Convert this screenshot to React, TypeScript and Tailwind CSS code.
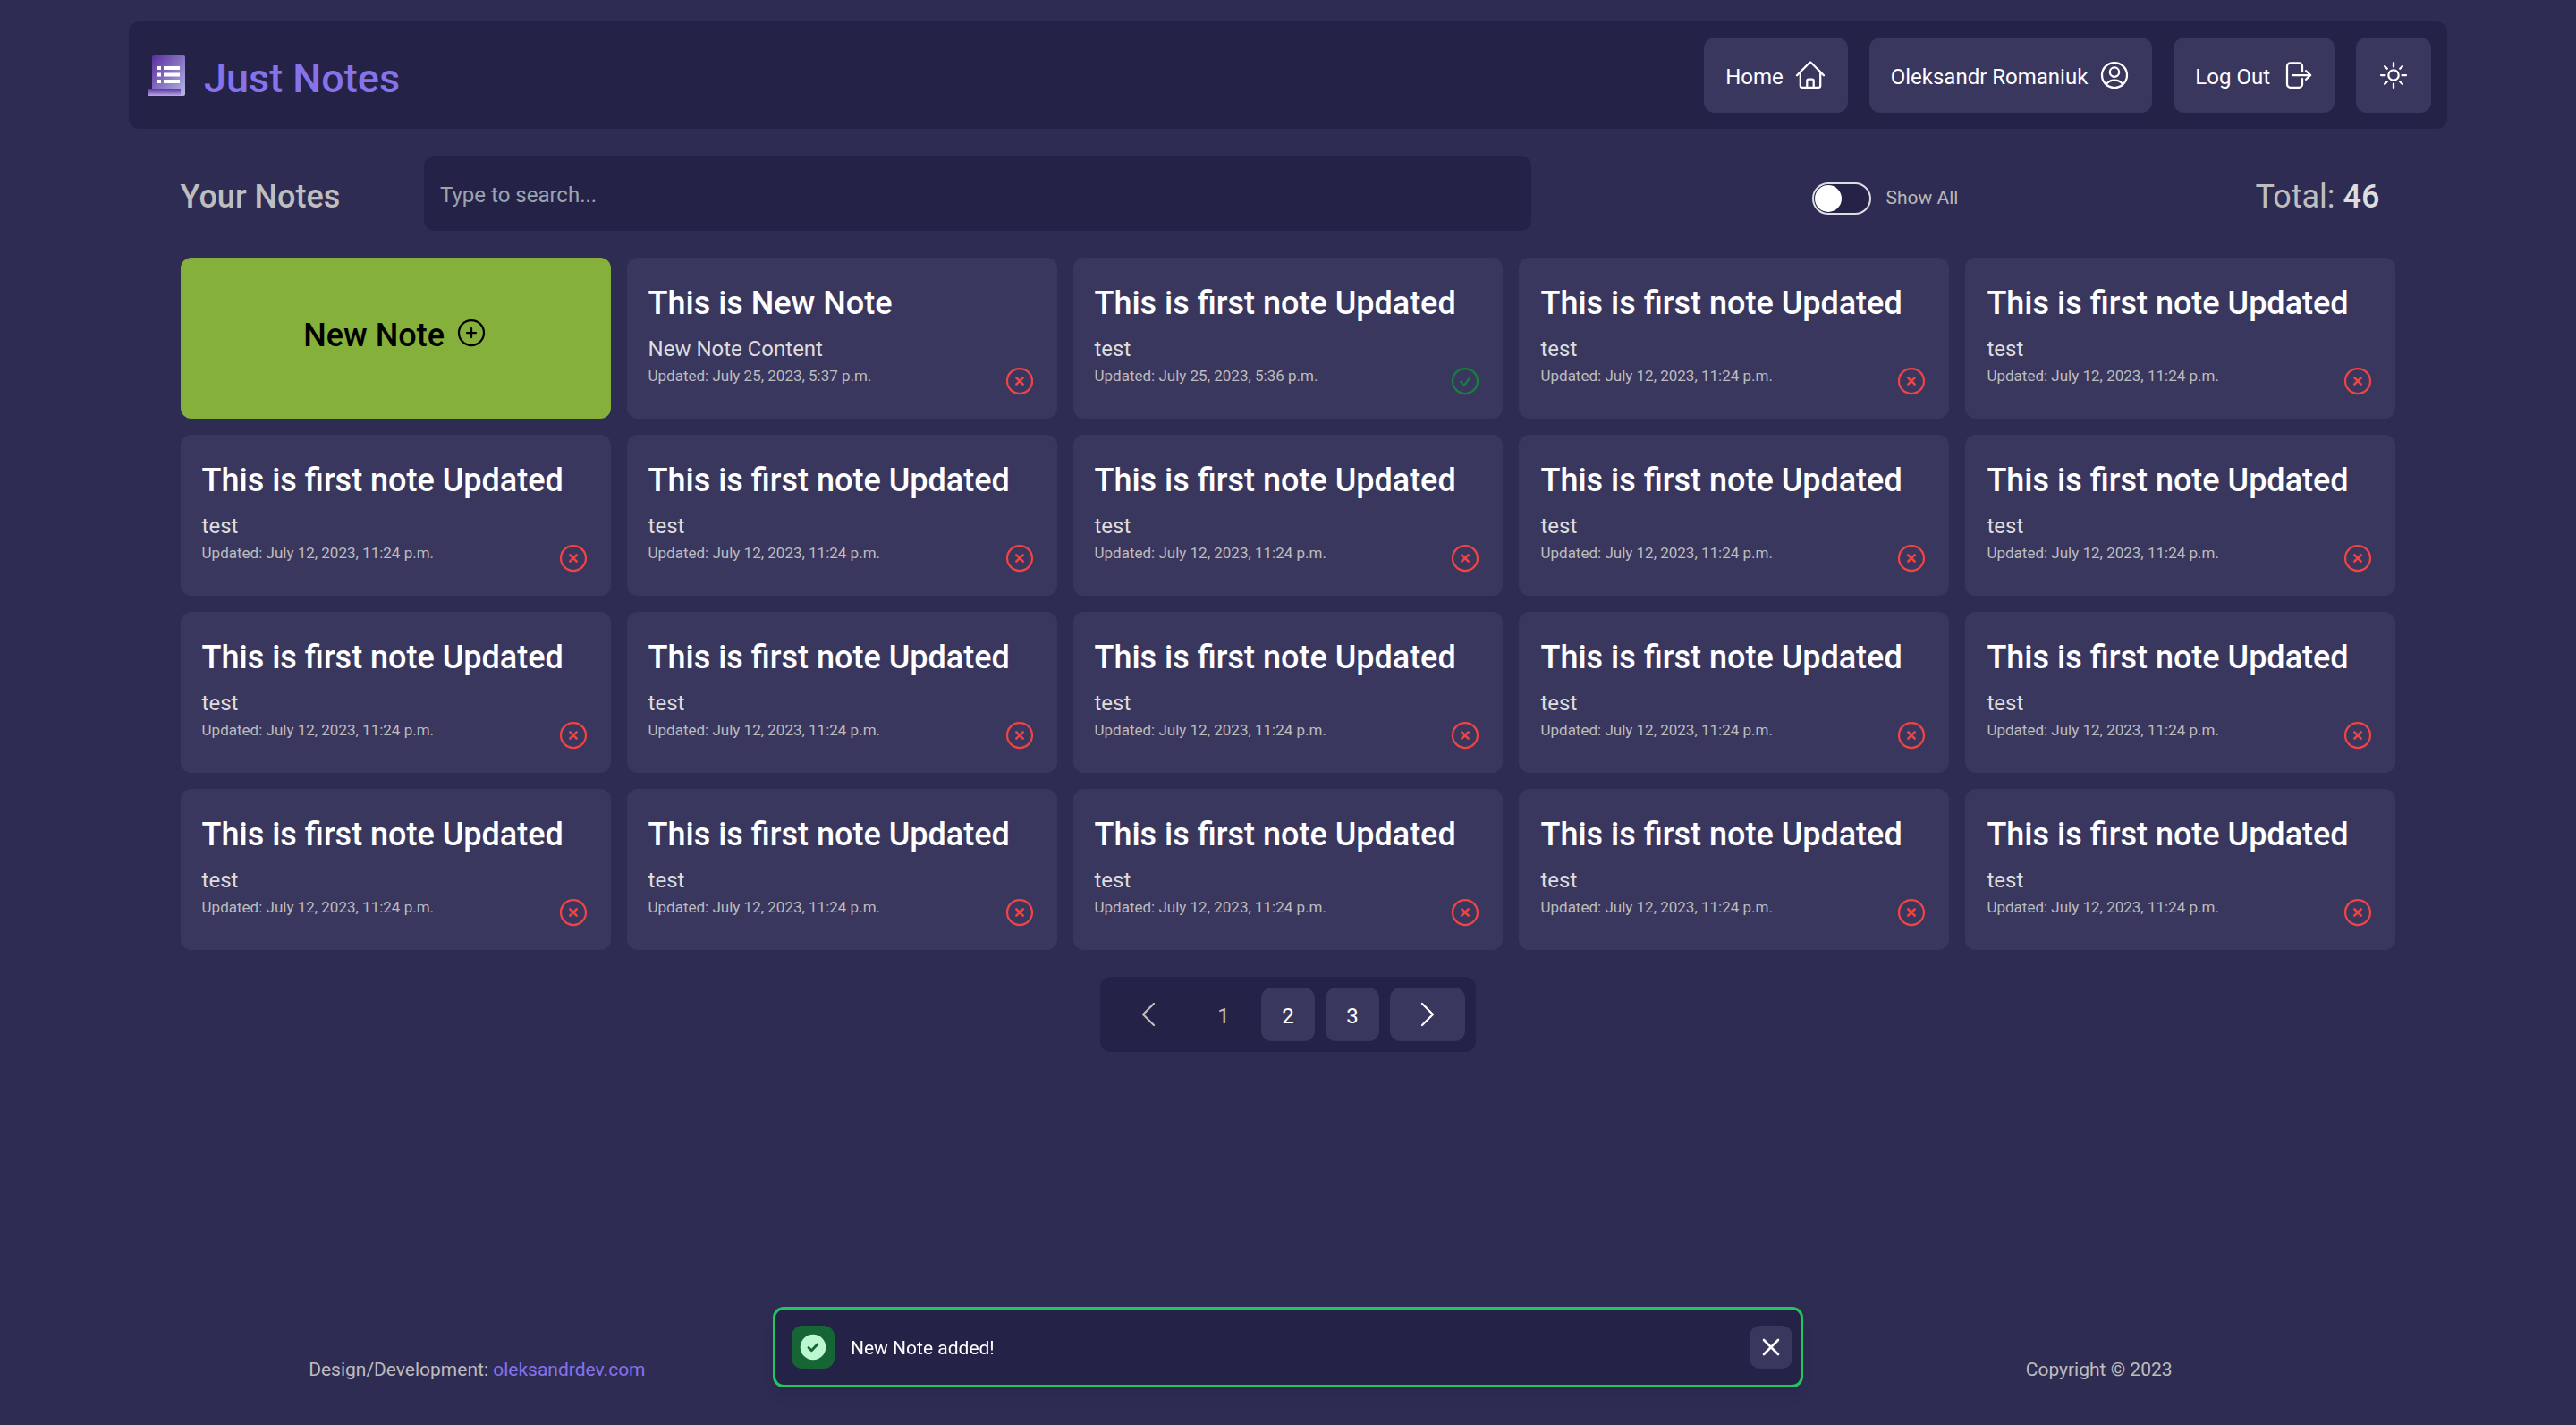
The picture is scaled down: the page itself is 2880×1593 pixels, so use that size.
import type { ReactNode } from "react";

type Note = { title: string; content: string; updated: string; done?: boolean };

const olderNote: Note = {
  title: "This is first note Updated",
  content: "test",
  updated: "July 12, 2023, 11:24 p.m.",
};

const notes: Note[] = [
  { title: "This is New Note", content: "New Note Content", updated: "July 25, 2023, 5:37 p.m." },
  { title: "This is first note Updated", content: "test", updated: "July 25, 2023, 5:36 p.m.", done: true },
  ...Array.from({ length: 17 }, () => olderNote),
];

function Icon({ children, className = "" }: { children: ReactNode; className?: string }) {
  return (
    <svg
      viewBox="0 0 36 36"
      className={`size-9 shrink-0 ${className}`}
      fill="none"
      stroke="currentColor"
      strokeWidth="2.25"
      strokeLinecap="round"
      strokeLinejoin="round"
      aria-hidden="true"
    >
      {children}
    </svg>
  );
}

function HomeIcon() {
  return (
    <Icon>
      <path d="M3 18.3 16.9 4.2a1.5 1.5 0 0 1 2.2 0L33 18.3" />
      <path d="M6.8 15v14.7a2.2 2.2 0 0 0 2.2 2.2h18a2.2 2.2 0 0 0 2.2-2.2V15" />
      <path d="M14.3 31.5v-7.3a1.6 1.6 0 0 1 1.6-1.6h4.2a1.6 1.6 0 0 1 1.6 1.6v7.3" />
    </Icon>
  );
}

function UserIcon() {
  return (
    <Icon>
      <circle cx="18" cy="18" r="14" />
      <circle cx="18" cy="14.6" r="5.2" />
      <path d="M8.8 28.2c2-3 5.4-4.7 9.2-4.7s7.2 1.7 9.2 4.7" />
    </Icon>
  );
}

function LogOutIcon() {
  return (
    <Icon>
      <path d="M24 14V8a3.600 3.600 0 0 0-3.600-3.600h-9.800A3.600 3.600 0 0 0 7 8v20.200a3.600 3.600 0 0 0 3.600 3.600h9.800a3.600 3.600 0 0 0 3.600-3.600v-6" />
      <path d="M13 18h20M28 13.200l5.200 4.800-5.200 4.800" />
    </Icon>
  );
}

function SunIcon() {
  return (
    <Icon>
      <circle cx="18" cy="18" r="5.700" />
      <path d="M18 4v4.500M18 27.500V32M4 18h4.500M27.500 18H32M8.100 8.100l2.700 2.700M25.200 25.200l2.700 2.700M8.100 27.900l2.700-2.700M25.200 10.800l2.700-2.700" />
    </Icon>
  );
}

function Logo() {
  return (
    <svg viewBox="0 0 42 46" className="h-[46px] w-[42px] shrink-0" aria-hidden="true">
      <defs>
        <linearGradient id="page" x1="0" y1="0" x2="1" y2="1">
          <stop offset="0" stopColor="#5b2d9f" />
          <stop offset="1" stopColor="#b3b9e6" />
        </linearGradient>
        <linearGradient id="roll" x1="0" y1="0" x2="0" y2="1">
          <stop offset="0" stopColor="#5f35a2" />
          <stop offset="1" stopColor="#b9b0e2" />
        </linearGradient>
      </defs>
      <rect x="5" y="1" width="37" height="45" rx="2" fill="url(#page)" />
      <path d="M0 39h37v5q0 1 1 2H2q-2 0-2-2z" fill="url(#roll)" />
      <path
        d="M11 13h4v4h-4zM18 13h18v4H18zM11 20.500h4v4h-4zM18 20.500h18v4H18zM11 28h4v4h-4zM18 28h18v4H18z"
        fill="#ffffff"
      />
    </svg>
  );
}

function NavItem({ label, children }: { label: string; children: ReactNode }) {
  return (
    <a href="#" className="flex h-[84px] items-center gap-3 rounded-xl bg-[#3a375f] px-6 text-2xl text-white">
      <span className="mt-1">{label}</span>
      {children}
    </a>
  );
}

function NoteCard({ note }: { note: Note }) {
  return (
    <a href="#" className="flex min-h-[180px] flex-col rounded-xl bg-[#3a375f] p-6">
      <h2 className="text-4xl leading-[54px] font-medium whitespace-nowrap text-white">{note.title}</h2>
      <div className="flex flex-1 justify-between">
        <div className="mt-2">
          <p className="text-2xl leading-8 text-[#dddddd]">{note.content}</p>
          <p className="text-[17px] leading-7 text-[#bcbcbc]">Updated: {note.updated}</p>
        </div>
        {note.done ? (
          <Icon className="self-end text-[#15803d]">
            <circle cx="18" cy="18" r="14" />
            <path d="m13 18.700 4 4.300 6.300-8.700" />
          </Icon>
        ) : (
          <Icon className="self-end text-[#ef4444]">
            <circle cx="18" cy="18" r="14" />
            <path d="m14.300 14.300 7.400 7.400M21.700 14.300l-7.400 7.400" strokeWidth="2.600" />
          </Icon>
        )}
      </div>
    </a>
  );
}

export default function App() {
  return (
    <div className="flex min-h-screen flex-col bg-[#2f2c54] pt-6 font-['Roboto',sans-serif] text-white">
      <header className="mx-auto flex w-[90%] items-center justify-between rounded-xl bg-[#252247] py-[18px] pr-[18px] pl-[21px]">
        <a href="#" className="flex items-center gap-[21px] text-[#8672ea]">
          <Logo />
          <span className="mt-2 text-[45px] leading-[60px] font-medium">Just Notes</span>
        </a>
        <nav className="flex gap-6">
          <NavItem label="Home">
            <HomeIcon />
          </NavItem>
          <NavItem label="Oleksandr Romaniuk">
            <UserIcon />
          </NavItem>
          <NavItem label="Log Out">
            <LogOutIcon />
          </NavItem>
          <button type="button" aria-label="Toggle theme" className="rounded-xl bg-[#3a375f] px-6">
            <SunIcon />
          </button>
        </nav>
      </header>

      <main className="mx-auto mt-[30px] w-[86%]">
        <div className="flex items-center">
          <h1 className="mt-2 w-[11%] text-4xl font-medium text-[#bebebe]">Your Notes</h1>
          <input
            type="search"
            aria-label="Search notes"
            placeholder="Type to search..."
            className="h-[84px] w-1/2 rounded-xl bg-[#252247] px-[18px] pt-1 text-2xl text-white placeholder:text-[#9ca3af]"
          />
          <label className="mt-3 flex flex-1 items-center justify-center gap-4 text-[21px] text-[#b8b8b8]">
            <input
              type="checkbox"
              role="switch"
              className="flex h-9 w-[66px] appearance-none items-center rounded-full border-2 border-[#dddde4] bg-[#252247] px-px before:size-[30px] before:rounded-full before:bg-white checked:justify-end"
            />
            Show All
          </label>
          <p className="mt-2 px-[18px] text-4xl text-[#bebebe]">
            Total: <span className="font-medium text-[#dddddd]">46</span>
          </p>
        </div>

        <section className="mt-[30px] grid grid-cols-5 gap-[18px]">
          <button
            type="button"
            className="flex min-h-[180px] items-center justify-center gap-3 rounded-xl bg-[#85b03c] pb-[6px] text-4xl font-medium text-black"
          >
            New Note
            <Icon className="mb-[6px]">
              <circle cx="18" cy="18" r="14" />
              <path d="M18 13v10M13 18h10" />
            </Icon>
          </button>
          {notes.map((note, i) => (
            <NoteCard key={i} note={note} />
          ))}
        </section>

        <nav
          aria-label="Pagination"
          className="mx-auto mt-[30px] flex w-fit gap-3 rounded-xl bg-[#252247] p-3 text-2xl"
        >
          <button type="button" disabled aria-label="Previous page" className="h-[60px] rounded-xl px-6 text-[#bebebe]">
            <Icon>
              <path d="M24 6 12 18l12 12" />
            </Icon>
          </button>
          <button type="button" disabled className="w-[60px] rounded-xl pt-1 text-[#bebebe]">
            1
          </button>
          <button type="button" className="w-[60px] rounded-xl bg-[#3a375f] pt-1">
            2
          </button>
          <button type="button" className="w-[60px] rounded-xl bg-[#3a375f] pt-1">
            3
          </button>
          <button type="button" aria-label="Next page" className="h-[60px] rounded-xl bg-[#3a375f] px-6">
            <Icon>
              <path d="m12 6 12 12-12 12" />
            </Icon>
          </button>
        </nav>
      </main>

      <footer className="mt-auto grid grid-cols-3 px-20 pb-[46px] text-center text-[21px] leading-8 text-[#bcbcbc]">
        <p>
          Design/Development:{" "}
          <a href="#" className="text-[#8672ea]">
            oleksandrdev.com
          </a>
        </p>
        <p className="col-start-3">Copyright © 2023</p>
      </footer>

      <div
        role="status"
        className="fixed inset-x-0 bottom-[42px] mx-auto flex h-[90px] w-2/5 items-center gap-[18px] rounded-xl border-3 border-[#22c55e] bg-[#252247] pr-[9px] pl-[18px] text-[21px] shadow-lg"
      >
        <div className="flex size-12 items-center justify-center rounded-xl bg-[#166534]">
          <svg viewBox="0 0 30 30" className="size-[30px]" aria-hidden="true">
            <circle cx="15" cy="15" r="14.300" fill="#bbf7d0" />
            <path
              d="m10 15.500 3.300 3.200 6.700-7"
              fill="none"
              stroke="#166534"
              strokeWidth="2.800"
              strokeLinecap="round"
              strokeLinejoin="round"
            />
          </svg>
        </div>
        <p className="mt-1 flex-1">New Note added!</p>
        <button
          type="button"
          aria-label="Close"
          className="flex size-12 items-center justify-center rounded-xl bg-[#3a375f]"
        >
          <svg viewBox="0 0 24 24" className="size-6" stroke="currentColor" strokeWidth="2.600" strokeLinecap="round" aria-hidden="true">
            <path d="m4 4 16 16M20 4 4 20" />
          </svg>
        </button>
      </div>
    </div>
  );
}
